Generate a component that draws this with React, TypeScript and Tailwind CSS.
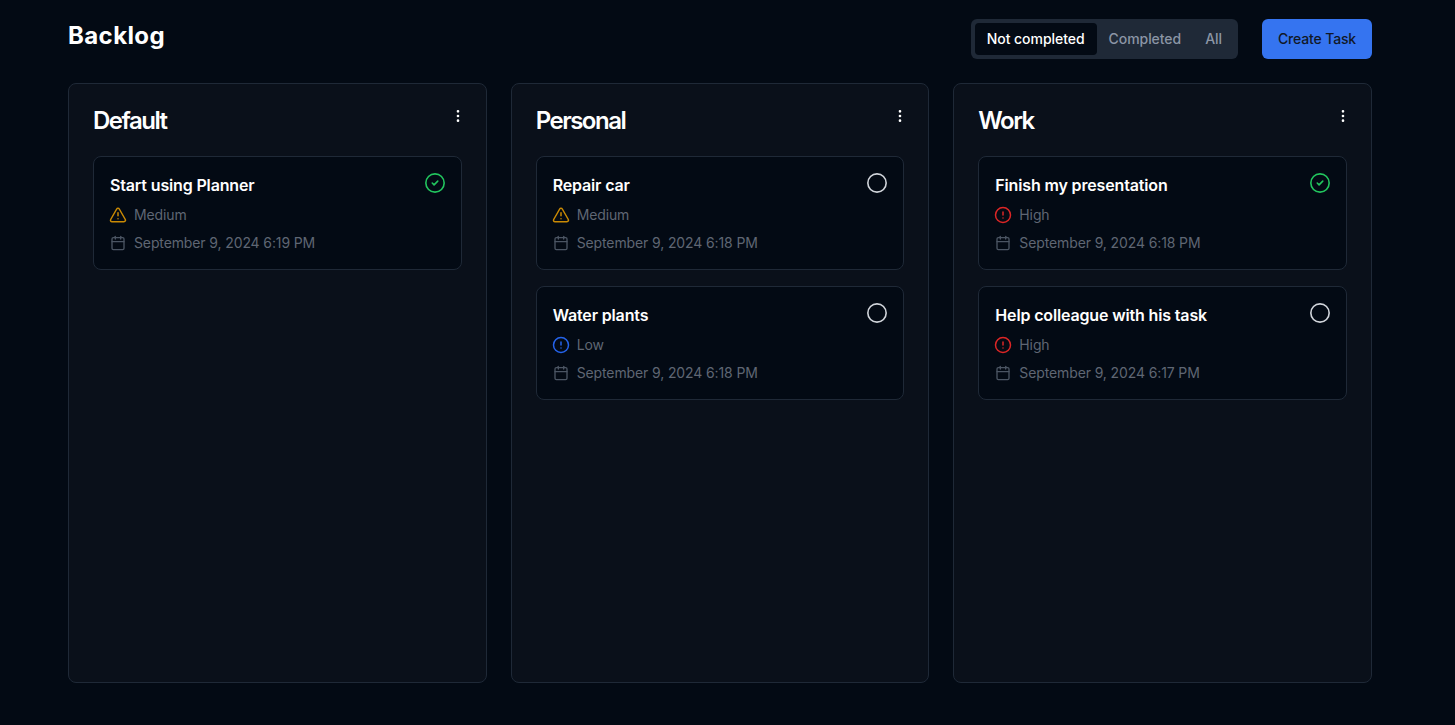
import { Calendar, Circle, CircleAlert, CircleCheck, EllipsisVertical, TriangleAlert } from 'lucide-react'

type Priority = 'Low' | 'Medium' | 'High'

type Task = {
  title: string
  priority: Priority
  date: string
  done?: boolean
}

const columns: { name: string; tasks: Task[] }[] = [
  {
    name: 'Default',
    tasks: [{ title: 'Start using Planner', priority: 'Medium', date: 'September 9, 2024 6:19 PM', done: true }],
  },
  {
    name: 'Personal',
    tasks: [
      { title: 'Repair car', priority: 'Medium', date: 'September 9, 2024 6:18 PM' },
      { title: 'Water plants', priority: 'Low', date: 'September 9, 2024 6:18 PM' },
    ],
  },
  {
    name: 'Work',
    tasks: [
      { title: 'Finish my presentation', priority: 'High', date: 'September 9, 2024 6:18 PM', done: true },
      { title: 'Help colleague with his task', priority: 'High', date: 'September 9, 2024 6:17 PM' },
    ],
  },
]

function PriorityIcon({ priority }: { priority: Priority }) {
  if (priority === 'Medium') return <TriangleAlert className="-mx-[1px] h-[18px] w-[18px] text-[#ca8a04]" />
  if (priority === 'High') return <CircleAlert className="-mx-[1px] h-[18px] w-[18px] text-[#dc2626]" />
  return <CircleAlert className="-mx-[1px] h-[18px] w-[18px] text-[#2563eb]" />
}

function TaskCard({ task }: { task: Task }) {
  return (
    <div className="flex h-[114px] flex-col rounded-lg border border-[#1f2937] bg-[#030a14] px-4 pt-4">
      <div className="flex items-start justify-between">
        <h3 className="text-base leading-6 font-semibold tracking-[-0.15px] text-white">{task.title}</h3>
        {task.done ? (
          <CircleCheck className="-mt-[1px] -mr-[1px] h-[22px] w-[22px] text-[#22c55e]" strokeWidth={1.75} />
        ) : (
          <Circle className="-mt-[1px] -mr-[1px] h-[22px] w-[22px] text-[#d1d5db]" strokeWidth={1.75} />
        )}
      </div>
      <div className="mt-2 flex h-5 items-center gap-2 text-sm tracking-[-0.12px] text-[#5f6673]">
        <PriorityIcon priority={task.priority} />
        <span>{task.priority}</span>
      </div>
      <div className="mt-2 flex h-5 items-center gap-2 text-sm tracking-[-0.12px] text-[#5f6673]">
        <Calendar className="h-4 w-4 text-[#4b5563]" />
        <span>{task.date}</span>
      </div>
    </div>
  )
}

export default function App() {
  return (
    <div className="h-[725px] overflow-hidden bg-[#030a14] pt-[19px] pr-[83px] pl-[68px] font-['Inter',sans-serif]">
      <div className="flex h-10 items-start justify-between">
        <h1 className="mt-[1px] text-2xl leading-8 font-bold tracking-[0.4px] text-white">Backlog</h1>
        <div className="flex items-center gap-6">
          <div className="flex h-10 items-center rounded-md bg-[#1f2937] p-1 text-sm font-medium tracking-[-0.05px] text-[#8b95a5]">
            <button className="h-8 rounded-sm bg-[#030a14] px-3 text-white">Not completed</button>
            <button className="h-8 px-3">Completed</button>
            <button className="h-8 px-3">All</button>
          </div>
          <button className="h-10 w-[110px] rounded-md bg-[#3574f0] text-sm font-medium tracking-[-0.15px] text-[#111827]">Create Task</button>
        </div>
      </div>

      <div className="mt-6 grid grid-cols-3 gap-6">
        {columns.map((column) => (
          <section key={column.name} className="h-[600px] rounded-lg border border-[#1f2937] bg-[#0a101a] px-6 pt-6">
            <div className="flex items-start justify-between">
              <h2 className="-mt-[3px] text-2xl leading-8 font-semibold tracking-[-1.5px] text-white">{column.name}</h2>
              <EllipsisVertical className="-mr-[4px] h-4 w-4 text-white" />
            </div>
            <div className="mt-[19px] flex flex-col gap-4">
              {column.tasks.map((task) => (
                <TaskCard key={task.title} task={task} />
              ))}
            </div>
          </section>
        ))}
      </div>
    </div>
  )
}
